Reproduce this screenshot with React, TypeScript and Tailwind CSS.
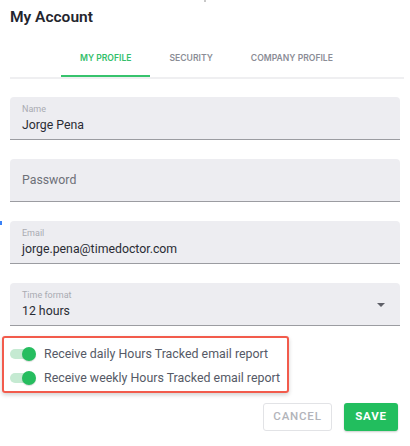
import React from "react"

const roboto = { fontFamily: "Roboto, 'Liberation Sans', sans-serif" }

function Field({ label, value, placeholder, select }: { label?: string; value?: string; placeholder?: string; select?: boolean }) {
  return (
    <div className="relative flex h-[43px] flex-col justify-center rounded-t-[4px] border-b border-[#9b9ca1] bg-[#ededf1] pl-[12px] pr-[14px]">
      {label ? (
        <>
          <div className="text-[9px] leading-[11px] text-[#a9abb1]">{label}</div>
          <div className="mt-[2px] text-[12.3px] leading-[16px] text-[#2a2c34]">{value}</div>
        </>
      ) : (
        <div className="text-[12.3px] leading-[16px] text-[#6e7078]">{placeholder}</div>
      )}
      {select && (
        <svg className="absolute right-[15px] top-[20px]" width="8" height="4" viewBox="0 0 8 4">
          <path d="M0 0h8L4 4z" fill="#5f6068" />
        </svg>
      )}
    </div>
  )
}

function Toggle() {
  return (
    <div className="relative h-[14px] w-[26px] shrink-0">
      <div className="absolute left-0 top-[2px] h-[10px] w-[23px] rounded-full bg-[#c5ead2]" />
      <div className="absolute right-0 top-0 h-[14px] w-[14px] rounded-full bg-[#26bd5f] shadow-[0_1px_1px_rgba(0,0,0,0.15)]" />
    </div>
  )
}

export default function App() {
  return (
    <div className="relative h-[446px] w-[410px] overflow-hidden bg-white" style={roboto}>
      <div className="absolute left-[204px] top-0 h-[2px] w-[2px] bg-[#c8c8c8]" />
      <div className="absolute left-0 top-[221px] h-[4px] w-[2px] bg-[#3b82f6]" />

      <div className="px-[10px]">
        <h1 className="pt-[7px] text-[15.5px] font-semibold leading-[20px] text-[#23252e]">
          My Account
        </h1>

        <div className="mt-[13px]" style={{ fontFamily: "Inter, sans-serif" }}>
          <div className="ml-[51px] flex h-[37px] text-[8.6px] font-semibold">
            <div className="relative flex items-center px-[19px] text-[#34c06b]">
              MY PROFILE
              <div className="absolute bottom-0 left-0 h-[2px] w-full bg-[#37c36d]" />
            </div>
            <div className="flex items-center px-[19px] text-[#8b8d96]">SECURITY</div>
            <div className="flex items-center px-[19px] text-[#8b8d96]">COMPANY PROFILE</div>
          </div>
          <div className="h-[2px] w-[394px] bg-[#efeff1]" />
        </div>

        <div className="mt-[18px] flex flex-col gap-[19px]">
          <Field label="Name" value="Jorge Pena" />
          <Field placeholder="Password" />
          <Field label="Email" value="jorge.pena@timedoctor.com" />
          <Field label="Time format" value="12 hours" select />
        </div>
      </div>

      <div className="ml-[2px] mt-[10px] flex w-[287px] flex-col gap-[10px] rounded-[3px] border-2 border-[#f25b4c] pb-[6px] pl-[6px] pt-[9px] shadow-[0_2px_4px_rgba(0,0,0,0.18)]">
        <div className="flex items-center gap-[8px] whitespace-nowrap text-[12.4px] leading-[14px] text-[#565a66]">
          <Toggle />
          <span>Receive daily Hours Tracked email report</span>
        </div>
        <div className="flex items-center gap-[8px] whitespace-nowrap text-[12.4px] leading-[14px] text-[#565a66]">
          <Toggle />
          <span>Receive weekly Hours Tracked email report</span>
        </div>
      </div>

      <div className="mt-[10px] flex justify-end gap-[12px] pr-[12px]">
        <button className="h-[28px] w-[69px] rounded-[3px] border border-[#e2e3e6] bg-white text-[11.5px] font-medium tracking-[0.8px] text-[#b2b4ba]">
          CANCEL
        </button>
        <button className="h-[28px] w-[54px] rounded-[3px] bg-[#22be5e] text-[11.5px] font-bold tracking-[0.8px] text-white shadow-[0_1px_2px_rgba(0,0,0,0.2)]">
          SAVE
        </button>
      </div>
    </div>
  )
}
